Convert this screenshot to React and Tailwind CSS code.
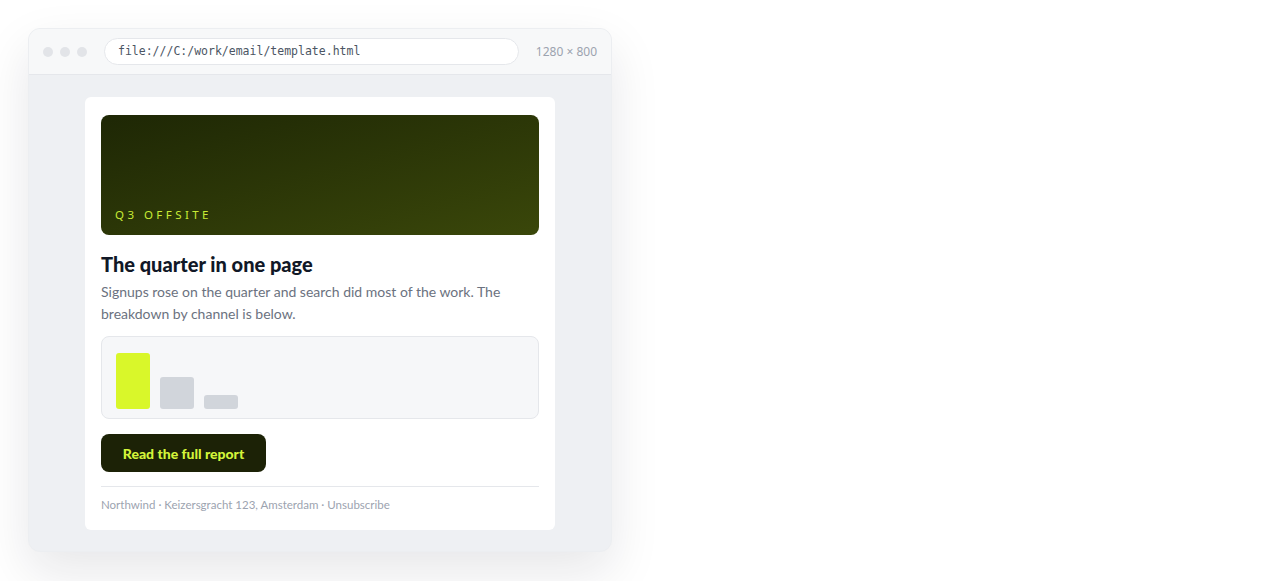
export default function App() {
  const bars = [
    { h: "h-[56px]", c: "bg-[#d9f72a]" },
    { h: "h-[32px]", c: "bg-[#d1d5db]" },
    { h: "h-[14px]", c: "bg-[#d1d5db]" },
  ];

  return (
    <div className="min-h-[581px] bg-white pt-[28px] pl-[28px] font-['Lato',sans-serif]">
      {/* BROWSER WINDOW */}
      <div className="w-[584px] rounded-xl border border-[#eceef1] bg-[#eef0f3] shadow-[0_20px_50px_rgba(15,23,42,0.10)] overflow-hidden">
        <div className="flex h-[46px] items-center border-b border-[#e5e7eb] bg-[#f7f8f9] pl-[14px] pr-[14px]">
          <div className="flex gap-[7px]">
            <span className="h-[10px] w-[10px] rounded-full bg-[#e2e4e8]" />
            <span className="h-[10px] w-[10px] rounded-full bg-[#e2e4e8]" />
            <span className="h-[10px] w-[10px] rounded-full bg-[#e2e4e8]" />
          </div>
          <div className="ml-[17px] flex h-[27px] w-[415px] items-center rounded-full border border-[#e5e7eb] bg-white pl-[13px] font-['DejaVu_Sans_Mono',monospace] text-[11.5px] text-[#4b5563]">
            file:///C:/work/email/template.html
          </div>
          <span className="ml-auto font-['Noto_Sans',sans-serif] text-[12px] text-[#9ca3af]">1280 × 800</span>
        </div>

        {/* EMAIL */}
        <div className="px-[56px] pt-[22px] pb-[21px]">
          <div className="rounded-md bg-white px-4 pt-[18px] pb-[16px]">
            <div className="flex h-[120px] items-end rounded-lg bg-gradient-to-br from-[#1e2705] to-[#3a470a] px-[14px] pb-[12px]">
              <span className="font-['Noto_Sans',sans-serif] text-[11.5px] tracking-[0.3em] text-[#c8eb35]">Q3 OFFSITE</span>
            </div>
            <h1 className="mt-[16px] text-[20px] font-black leading-[26px] text-[#111827]">
              The quarter in one page
            </h1>
            <p className="mt-[4px] text-[14px] leading-[22px] text-[#6b7280]">
              Signups rose on the quarter and search did most of the work. The breakdown by channel is below.
            </p>
            <div className="mt-[11px] flex h-[83px] items-end gap-[10px] rounded-lg border border-[#e5e7eb] bg-[#f6f7f9] px-[14px] pb-[9px]">
              {bars.map((b, i) => (
                <div key={i} className={`w-[34px] rounded-[3px] ${b.h} ${b.c}`} />
              ))}
            </div>
            <button className="mt-[15px] flex h-[38px] w-[165px] items-center justify-center rounded-lg bg-[#1c2206] text-[14px] font-black text-[#d4f53a]">
              Read the full report
            </button>
            <div className="mt-[14px] border-t border-[#e5e7eb] pt-[9px] text-[11.5px] leading-[18px] text-[#9ca3af]">
              Northwind · Keizersgracht 123, Amsterdam · Unsubscribe
            </div>
          </div>
        </div>
      </div>
    </div>
  );
}
